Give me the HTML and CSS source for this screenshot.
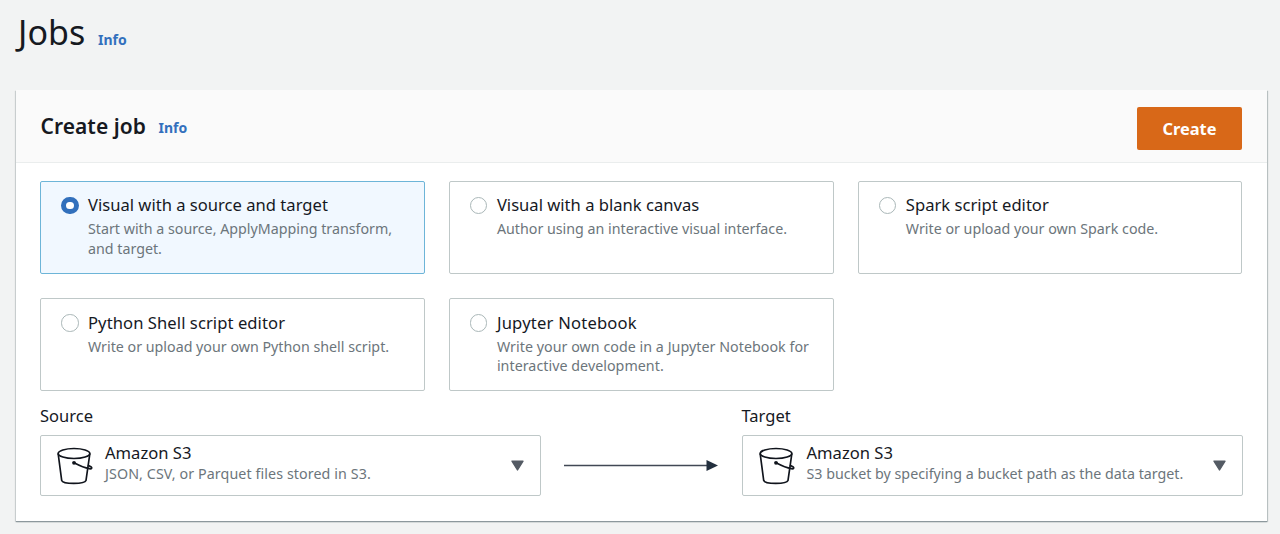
FILE: index.html
```html
<!DOCTYPE html>
<html lang="en">
<head>
<meta charset="utf-8">
<title>Jobs</title>
<link rel="stylesheet" href="styles.css">
</head>
<body>
<svg class="defs" width="0" height="0" aria-hidden="true">
  <symbol id="bucket" viewBox="0 0 38 40">
    <g fill="none" stroke="#10141c" stroke-width="1.7" stroke-linecap="round" stroke-linejoin="round">
      <ellipse cx="17" cy="6.500" rx="15.800" ry="5"/>
      <path d="M1.200 7 4.700 33.500C6 37.400 27.500 37.400 29 33.500L32.800 7"/>
      <path d="M17 15.800C22 18.400 28 21 32.300 21.700 35 22.100 35.300 20.800 33.900 19.800L31.500 18.400"/>
    </g>
    <circle cx="17" cy="15.800" r="1.900" fill="#10141c"/>
  </symbol>
</svg>
<header class="page-header">
  <h1 class="page-title">Jobs</h1>
  <a class="info">Info</a>
</header>
<main class="panel">
  <div class="panel-header">
    <h2 class="panel-title">Create job</h2>
    <a class="info">Info</a>
    <button class="create">Create</button>
  </div>
  <div class="panel-body">
    <div class="options">
      <label class="option selected"><span class="radio"></span><span class="option-text"><span class="title">Visual with a source and target</span><span class="desc">Start with a source, ApplyMapping transform,<br>and target.</span></span></label>
      <label class="option"><span class="radio"></span><span class="option-text"><span class="title">Visual with a blank canvas</span><span class="desc">Author using an interactive visual interface.</span></span></label>
      <label class="option"><span class="radio"></span><span class="option-text"><span class="title">Spark script editor</span><span class="desc">Write or upload your own Spark code.</span></span></label>
      <label class="option"><span class="radio"></span><span class="option-text"><span class="title loose">Python Shell script editor</span><span class="desc">Write or upload your own Python shell script.</span></span></label>
      <label class="option"><span class="radio"></span><span class="option-text"><span class="title looser">Jupyter Notebook</span><span class="desc wide">Write your own code in a Jupyter Notebook for<br>interactive development.</span></span></label>
    </div>
    <div class="flow">
      <div class="field">
        <span class="field-label">Source</span>
        <div class="select">
          <svg class="bucket"><use href="#bucket"/></svg>
          <span class="select-text"><span class="title">Amazon S3</span><span class="desc wider">JSON, CSV, or Parquet files stored in S3.</span></span>
          <svg class="caret" viewBox="0 0 13 11"><path d="M1 1.200h11L6.500 10z" fill="#545b64" stroke="#545b64" stroke-width="1.400" stroke-linejoin="round"/></svg>
        </div>
      </div>
      <svg class="arrow" viewBox="0 0 154 12"><path d="M0 6.500h144" stroke="#414855" stroke-width="1.600"/><path d="M142.500 1v11L154 6.500z" fill="#232f3e"/></svg>
      <div class="field">
        <span class="field-label">Target</span>
        <div class="select">
          <svg class="bucket"><use href="#bucket"/></svg>
          <span class="select-text"><span class="title">Amazon S3</span><span class="desc">S3 bucket by specifying a bucket path as the data target.</span></span>
          <svg class="caret" viewBox="0 0 13 11"><path d="M1 1.200h11L6.500 10z" fill="#545b64" stroke="#545b64" stroke-width="1.400" stroke-linejoin="round"/></svg>
        </div>
      </div>
    </div>
  </div>
</main>
</body>
</html>
```
FILE: styles.css
```css
* { box-sizing: border-box; }
body {
  margin: 0;
  height: 534px;
  overflow: hidden;
  padding: 0 13px 0 16px;
  background: #f2f3f3;
  color: #16191f;
  font-family: "Noto Sans", sans-serif;
}
.defs { display: block; }
.page-header { display: flex; align-items: baseline; height: 90px; padding: 9px 0 0 2px; }
.page-title { margin: 0; font-size: 34px; font-weight: 400; line-height: 47px; letter-spacing: .1px; }
.info { margin-left: 12.500px; font-size: 14px; font-weight: 700; color: #3370bd; }
.panel {
  height: 431px;
  background: #fff;
  box-shadow: 0 1px 1px #8d989d, 1px 1px 1px rgba(0, 28, 36, .2), -1px 1px 1px rgba(0, 28, 36, .12);
}
.panel-header {
  display: flex;
  align-items: flex-start;
  height: 73px;
  padding: 17px 25px 0 24.5px;
  background: #fafafa;
  border-bottom: 1px solid #eaeded;
}
.panel-title { margin: -1px 0 0; font-size: 21px; font-weight: 600; line-height: 40px; letter-spacing: .05px; }
.panel-header .info { line-height: 42px; }
.create {
  width: 105px;
  height: 43px;
  margin-left: auto;
  padding: 0;
  border: 0;
  border-radius: 2px;
  background: #d86818;
  color: #fff;
  font: 700 16.4px/42px "Noto Sans", sans-serif;
}
.panel-body { padding: 17.5px 24.5px 0 24px; }
.options { display: grid; grid-template-columns: repeat(3, 1fr); grid-auto-rows: 93.25px; gap: 24.25px; }
.option { display: flex; padding: 12.500px 0 0 20px; border: 1px solid #bfc8c8; border-radius: 2px; }
.option.selected { border-color: #6db5d8; background: #f1f8ff; }
.radio { width: 17.500px; height: 17.500px; margin: 2.500px 9.500px 0 0; border: 1.500px solid #aab7b8; border-radius: 50%; background: #fff; }
.selected .radio { border: 5.500px solid #3270bc; }
.option-text { display: block; }
.title, .desc { display: block; white-space: nowrap; }
.title { font-size: 16.600px; line-height: 22px; }
.title.loose { letter-spacing: .07px; }
.title.looser { letter-spacing: .2px; }
.desc { margin-top: 3px; font-size: 14.250px; line-height: 19.500px; color: #6c757b; }
.desc.wide { letter-spacing: .04px; }
.desc.wider { letter-spacing: .1px; }
.flow { display: flex; justify-content: space-between; padding-top: 13.75px; }
.field { width: 501px; }
.field-label { display: block; height: 29.500px; font-size: 16.500px; line-height: 22px; }
.select { display: flex; height: 61.500px; padding: 6px 16px 0; border: 1px solid #bfc8c8; border-radius: 2px; }
.bucket { width: 38px; height: 40px; margin: 5px 10px 0 0; }
.select-text { flex: 1; }
.select .desc { margin-top: 0; }
.caret { width: 13px; height: 11px; margin-top: 18px; }
.arrow { width: 154px; height: 12px; margin-top: 53.5px; }
```
